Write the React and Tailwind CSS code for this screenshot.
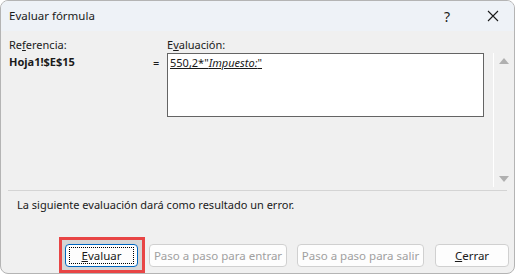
import React from "react";

const font = { fontFamily: '"Noto Sans", "Liberation Sans", sans-serif' };

const Btn = ({ children, disabled, focused, className = "" }) => (
  <div
    className={`h-[23px] flex items-center justify-center rounded-[4px] border bg-[#fdfdfd] text-[11.5px] ${
      focused ? "border-[#0067c0]" : "border-[#d0d0d0]"
    } ${disabled ? "text-[#a0a0a0]" : "text-[#1a1a1a]"} ${className}`}
  >
    {focused ? (
      <div className="w-[calc(100%-6px)] h-[17px] border border-dotted border-black flex items-center justify-center">
        {children}
      </div>
    ) : (
      children
    )}
  </div>
);

export default function App() {
  return (
    <div className="w-[516px] h-[276px] bg-white" style={font}>
      <div className="w-[515px] h-[274px] rounded-[8px] border border-[#b4b4b4] bg-[#f0f0f0] overflow-hidden flex flex-col text-[#1a1a1a]">
        {/* title bar */}
        <div className="h-[31px] bg-[#eef2f7] flex items-center pl-[8px] text-[11.5px]">
          <span className="flex-1">Evaluar fórmula</span>
          <span className="w-[20px] text-center text-[14px] mr-[30px]">?</span>
          <svg width="12" height="12" viewBox="0 0 12 12" className="mr-[15px]">
            <path d="M1 1 L11 11 M11 1 L1 11" stroke="#1a1a1a" strokeWidth="1.1" />
          </svg>
        </div>

        {/* body */}
        <div className="flex pl-[8px] pt-[6px] text-[11px]">
          <div className="w-[144px] flex flex-col">
            <span className="leading-[16px]">
              Re<span className="underline">f</span>erencia:
            </span>
            <span className="font-bold leading-[16px] mt-[1px]">Hoja1!$E$15</span>
          </div>
          <div className="w-[14px] pt-[18px] leading-[16px]">=</div>
          <div className="w-[317px] flex flex-col">
            <span className="leading-[16px]">
              E<span className="underline">v</span>aluación:
            </span>
            <div className="h-[64px] bg-white border border-[#646464] px-[2px] leading-[16px] pt-[1px]">
              <span className="underline">
                550,2*"<i>Impuesto:</i>"
              </span>
            </div>
          </div>
          <div className="ml-[9px] mt-[16px] h-[134px] w-[20px] border-l border-white flex flex-col items-center justify-between py-[5px]">
            <svg width="10" height="6" viewBox="0 0 10 6">
              <path d="M0 6 L5 0 L10 6 Z" fill="#b0b0b0" />
            </svg>
            <svg width="10" height="6" viewBox="0 0 10 6">
              <path d="M0 0 L5 6 L10 0 Z" fill="#b0b0b0" />
            </svg>
          </div>
        </div>

        <div className="mx-[7px] mt-[3px] h-px bg-[#d4d4d4]" />

        <div className="pl-[16px] mt-[6px] text-[11px] leading-[16px]">
          La siguiente evaluación dará como resultado un error.
        </div>

        <div className="flex items-end mt-[24px] pl-[58px]">
          <div className="border-[3px] border-[#e84545] bg-[#d6d6d6] pl-[3px] pr-[4px] pt-[4px] pb-[3px]">
            <Btn focused className="w-[73px]">
              <span>
                <span className="underline">E</span>valuar
              </span>
            </Btn>
          </div>
          <Btn disabled className="w-[138px] ml-[4px] mb-[6px]">Paso a paso para entrar</Btn>
          <Btn disabled className="w-[127px] ml-[10px] mb-[6px]">Paso a paso para salir</Btn>
          <Btn className="w-[74px] ml-[11px] mb-[6px]">
            <span>
              <span className="underline">C</span>errar
            </span>
          </Btn>
        </div>
      </div>
    </div>
  );
}
